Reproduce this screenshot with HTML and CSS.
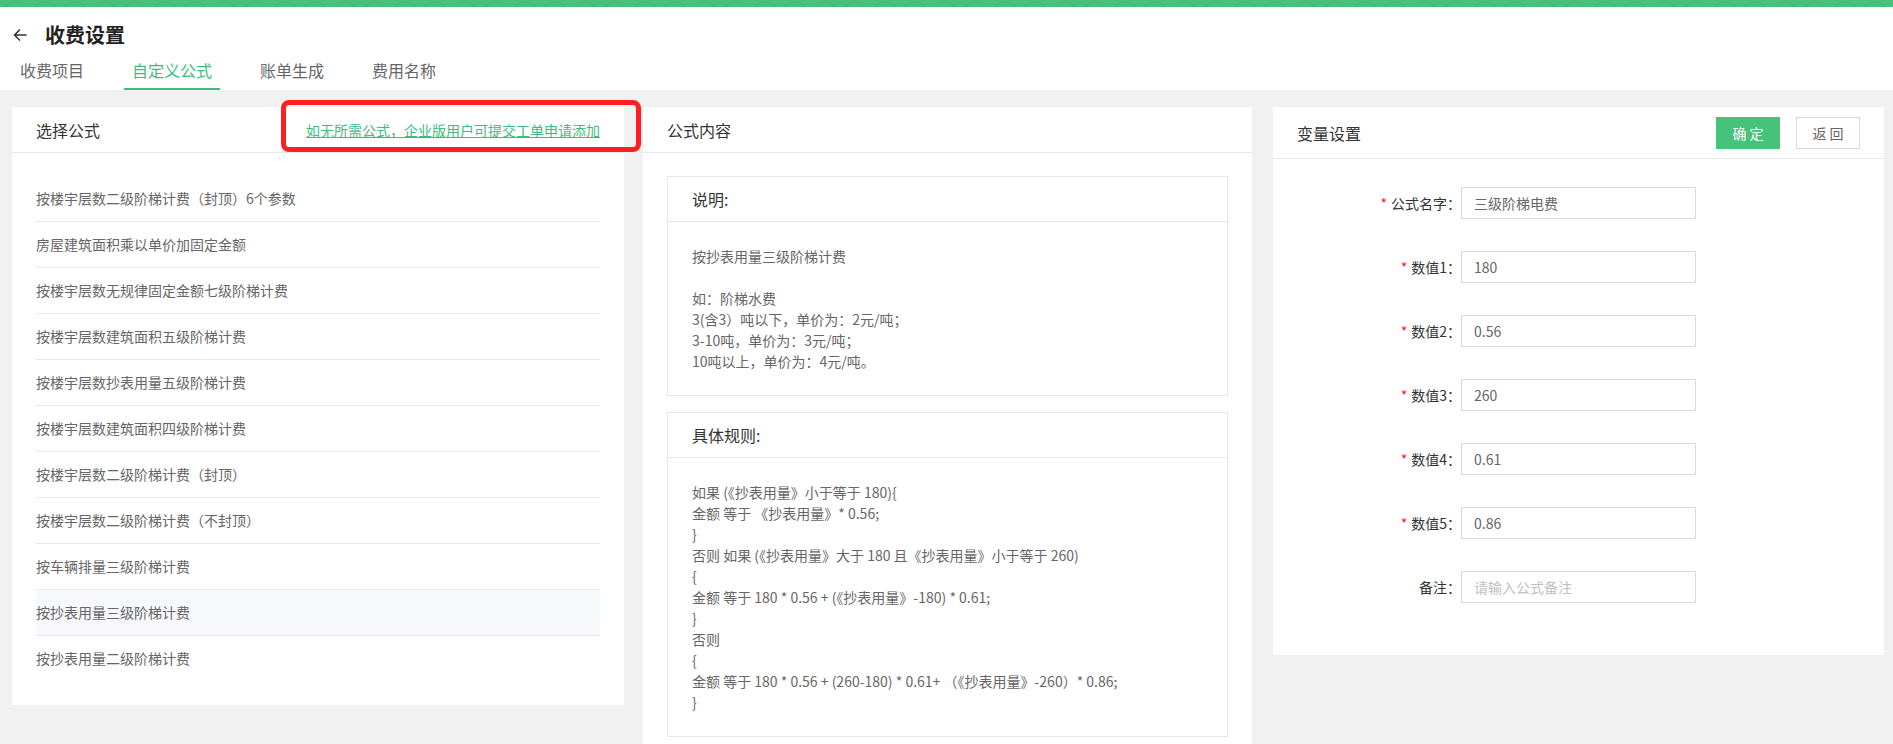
FILE: index.html
```html
<!DOCTYPE html>
<html lang="zh-CN">
<head>
<meta charset="utf-8">
<title>收费设置</title>
<link rel="stylesheet" href="styles.css">
</head>
<body>
<div class="topbar"></div>
<header class="header">
  <div class="title-row">
    <svg class="back" width="14" height="12" viewBox="0 0 14 12"><path d="M13 6H1.5M6.5 1L1.5 6l5 5" fill="none" stroke="#333" stroke-width="1.6" stroke-linecap="round" stroke-linejoin="round"/></svg>
    <h1 class="title">收费设置</h1>
  </div>
  <nav class="tabs">
    <span class="tab">收费项目</span>
    <span class="tab active">自定义公式</span>
    <span class="tab">账单生成</span>
    <span class="tab">费用名称</span>
  </nav>
</header>
<main class="main">
  <section class="panel panel-left">
    <div class="panel-head">
      <span class="panel-title">选择公式</span>
      <a class="hint-link">如无所需公式，企业版用户可提交工单申请添加</a>
      <span class="annot"></span>
    </div>
    <ul class="formula-list">
      <li>按楼宇层数二级阶梯计费（封顶）6个参数</li>
      <li>房屋建筑面积乘以单价加固定金额</li>
      <li>按楼宇层数无规律固定金额七级阶梯计费</li>
      <li>按楼宇层数建筑面积五级阶梯计费</li>
      <li>按楼宇层数抄表用量五级阶梯计费</li>
      <li>按楼宇层数建筑面积四级阶梯计费</li>
      <li>按楼宇层数二级阶梯计费（封顶）</li>
      <li>按楼宇层数二级阶梯计费（不封顶）</li>
      <li>按车辆排量三级阶梯计费</li>
      <li class="selected">按抄表用量三级阶梯计费</li>
      <li>按抄表用量二级阶梯计费</li>
    </ul>
  </section>

  <section class="panel panel-mid">
    <div class="panel-head">
      <span class="panel-title">公式内容</span>
    </div>
    <div class="mid-body">
      <div class="box">
        <div class="box-head">说明:</div>
        <div class="box-body">
          <p>按抄表用量三级阶梯计费</p>
          <p>&nbsp;</p>
          <p>如：阶梯水费</p>
          <p>3(含3）吨以下，单价为：2元/吨；</p>
          <p>3-10吨，单价为：3元/吨；</p>
          <p>10吨以上，单价为：4元/吨。</p>
        </div>
      </div>
      <div class="box box-rules">
        <div class="box-head">具体规则:</div>
        <div class="box-body">
          <p>如果 (《抄表用量》小于等于 180){</p>
          <p>金额 等于 《抄表用量》* 0.56;</p>
          <p>}</p>
          <p>否则 如果 (《抄表用量》大于 180 且《抄表用量》小于等于 260)</p>
          <p>{</p>
          <p>金额 等于 180 * 0.56 + (《抄表用量》-180) * 0.61;</p>
          <p>}</p>
          <p>否则</p>
          <p>{</p>
          <p>金额 等于 180 * 0.56 + (260-180) * 0.61+ （《抄表用量》-260）* 0.86;</p>
          <p>}</p>
        </div>
      </div>
    </div>
  </section>

  <section class="panel panel-right">
    <div class="panel-head panel-head-tall">
      <span class="panel-title">变量设置</span>
      <div class="actions">
        <button class="btn btn-primary">确 定</button>
        <button class="btn btn-default">返 回</button>
      </div>
    </div>
    <form class="form">
      <div class="form-row">
        <label class="label"><span class="req">*</span>公式名字：</label>
        <div class="input">三级阶梯电费</div>
      </div>
      <div class="form-row">
        <label class="label"><span class="req">*</span>数值1：</label>
        <div class="input">180</div>
      </div>
      <div class="form-row">
        <label class="label"><span class="req">*</span>数值2：</label>
        <div class="input">0.56</div>
      </div>
      <div class="form-row">
        <label class="label"><span class="req">*</span>数值3：</label>
        <div class="input">260</div>
      </div>
      <div class="form-row">
        <label class="label"><span class="req">*</span>数值4：</label>
        <div class="input">0.61</div>
      </div>
      <div class="form-row">
        <label class="label"><span class="req">*</span>数值5：</label>
        <div class="input">0.86</div>
      </div>
      <div class="form-row">
        <label class="label">备注：</label>
        <div class="input placeholder">请输入公式备注</div>
      </div>
    </form>
  </section>
</main>
</body>
</html>
```

FILE: styles.css
```css
* { box-sizing: border-box; }
html, body { margin: 0; padding: 0; overflow: hidden; }
body {
  background: #f1f1f1;
  font-family: "Noto Sans CJK SC", "Microsoft YaHei", sans-serif;
  color: #333;
  font-size: 14px;
}
p { margin: 0; }

.topbar {
  height: 7px;
  background-color: #46c37b;
  background-image: radial-gradient(circle at 50% 100%, transparent 11px, rgba(0,0,0,0.07) 12px, transparent 13px);
  background-size: 30px 14px;
}

.header {
  background: #fff;
  height: 83px;
  padding-left: 12px;
}
.title-row {
  height: 45px;
  padding-top: 11px;
  display: flex;
  align-items: center;
  padding-left: 1px;
}
.back { display: block; margin-right: 18px; }
.title {
  margin: 0;
  font-size: 20px;
  font-weight: 700;
  color: #222;
  line-height: 28px;
}
.tabs {
  display: flex;
  gap: 32px;
  height: 38px;
}
.tab {
  padding: 0 8px;
  font-size: 16px;
  line-height: 36px;
  color: #666;
  border-bottom: 2px solid transparent;
}
.tab.active {
  color: #3dbd7d;
  border-bottom-color: #3dbd7d;
}

.main {
  display: grid;
  grid-template-columns: 612px 610px 612px;
  column-gap: 19px;
  align-items: start;
  padding: 17px 0 0 12px;
}
.panel-mid { margin-right: 1px; }
.panel {
  background: #fff;
}
.panel-right { margin-left: 1px; }

.panel-head {
  position: relative;
  height: 46px;
  border-bottom: 1px solid #e8e8e8;
  display: flex;
  align-items: center;
  justify-content: space-between;
  padding: 0 24px;
}
.panel-head-tall { height: 52px; }
.panel-title {
  font-size: 16px;
  color: #333;
}
.hint-link {
  font-size: 14px;
  color: #3dbd7d;
  text-decoration: underline;
  cursor: pointer;
  margin-top: 1px;
}
.annot {
  position: absolute;
  left: 269px;
  top: -7px;
  width: 360px;
  height: 52px;
  border: 5px solid #ff1f1f;
  border-radius: 8px;
  pointer-events: none;
}

.formula-list {
  list-style: none;
  margin: 0;
  padding: 23px 24px 24px;
}
.formula-list li {
  height: 46px;
  line-height: 45px;
  border-bottom: 1px solid #e8e8e8;
  color: #666;
  font-size: 14px;
}
.formula-list li:last-child { border-bottom: none; height: 45px; }
.formula-list li.selected { background: #f7f8fc; }

.mid-body {
  padding: 23px 24px 24px;
}
.box {
  border: 1px solid #e6e6e6;
}
.box + .box { margin-top: 16px; }
.box-head {
  height: 45px;
  line-height: 44px;
  border-bottom: 1px solid #e6e6e6;
  padding-left: 24px;
  font-size: 16px;
  color: #333;
}
.box-body {
  padding: 24px 24px 23px;
  font-size: 14px;
  line-height: 21px;
  color: #666;
}

.actions { display: flex; gap: 16px; }
.btn {
  width: 64px;
  height: 32px;
  font-family: inherit;
  font-size: 14px;
  border-radius: 0;
  padding: 0;
  cursor: pointer;
}
.btn-primary {
  background: #46c37b;
  border: 1px solid #46c37b;
  color: #fff;
}
.btn-default {
  background: #fff;
  border: 1px solid #d9d9d9;
  color: #666;
}

.form {
  padding: 28px 0 20px;
}
.form-row {
  display: flex;
  align-items: center;
  margin-bottom: 32px;
}
.label {
  width: 188px;
  text-align: right;
  font-size: 14px;
  color: #333;
}
.req {
  color: #f5222d;
  margin-right: 4px;
}
.input {
  width: 235px;
  height: 32px;
  border: 1px solid #d9d9d9;
  padding-left: 12px;
  line-height: 30px;
  font-size: 14px;
  color: #666;
}
.input.placeholder { color: #bfbfbf; }
```
